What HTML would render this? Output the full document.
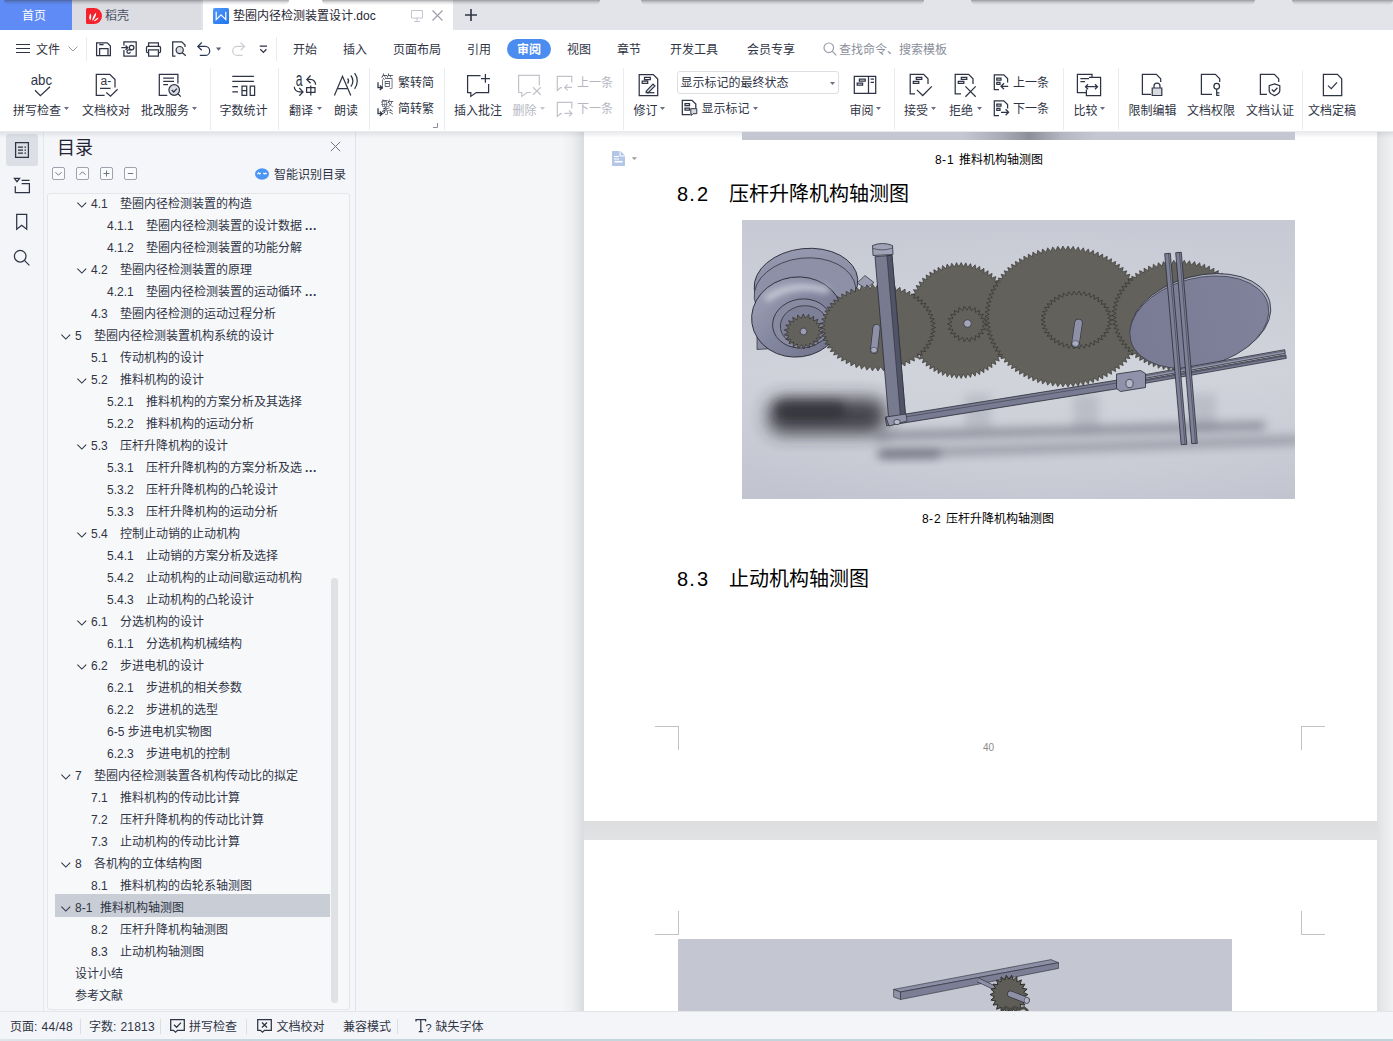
<!DOCTYPE html>
<html lang="zh-CN">
<head>
<meta charset="utf-8">
<title>垫圈内径检测装置设计.doc</title>
<style>
*{box-sizing:border-box;margin:0;padding:0}
html,body{width:1393px;height:1041px;overflow:hidden;background:#fff}
body{position:relative;font-family:"Liberation Sans","Noto Sans CJK SC",sans-serif;font-size:12px;color:#2f3445;line-height:16px}
.abs{position:absolute}
.t{position:absolute;white-space:nowrap;height:16px;line-height:16px}
svg{position:absolute;overflow:visible}
.ic{fill:none;stroke:#2e3445;stroke-width:1.25}
.dis{color:#b4b7bf}
.vsep{position:absolute;width:1px;background:#eaecf0}
.arr{position:absolute;width:0;height:0;border-left:2.500px solid transparent;border-right:2.500px solid transparent;border-top:3px solid #6b7080}
.arr.d{border-top-color:#c3c5cb}
/* tab bar */
#tabbar{left:0;top:0;width:1393px;height:30px;background:#e2e4e9}
#menurow{left:0;top:30px;width:1393px;height:36px;background:#fff}
#ribbon{left:0;top:66px;width:1393px;height:66px;background:#fff}
.tr{color:#2f3445}
.el{display:inline-block;margin-left:3px;letter-spacing:.6px;font-weight:bold}
</style>
</head>
<body>
<div id="tabbar" class="abs">
  <div class="abs" style="left:0;top:0;width:72px;height:30px;background:#5f8bf6"></div>
  <div class="t" style="left:22px;top:8px;color:#fff;font-size:12px">首页</div>
  <div class="abs" style="left:72px;top:0;width:129px;height:30px;background:#dbdde2"></div>
  <svg style="left:86px;top:8px" width="16" height="16" viewBox="0 0 16 16"><path d="M0 1.500A1.500 1.500 0 0 1 1.500 0H8a8 8 0 0 1 0 16H1.500A1.500 1.500 0 0 1 0 14.500z" fill="#f5222d"/><path d="M4.200 12.500C2.600 10.500 3 7.500 4.600 5.600C5.600 8 5.400 10.600 4.200 12.500zM6.200 12.800C6.400 10 7.800 6.600 10.200 4.600C10.200 8 8.800 11 6.200 12.800zM7.600 13.200C9 11.400 10.800 10 12.600 9.400C12 11.400 10 13 7.600 13.200z" fill="#fff"/></svg>
  <div class="t" style="left:105px;top:8px;color:#4a4f63">稻壳</div>
  <div class="abs" style="left:203px;top:0;width:250px;height:30px;background:#fff"></div>
  <svg style="left:213px;top:8px" width="16" height="16" viewBox="0 0 16 16"><defs><linearGradient id="wg" x1="0" y1="0" x2="1" y2="1"><stop offset="0" stop-color="#5298f8"/><stop offset="1" stop-color="#1f74ee"/></linearGradient></defs><rect width="16" height="16" rx="1.500" fill="url(#wg)"/><path d="M3.200 3.800V11.600L8 6.800L12.800 11.600V3.800" fill="none" stroke="#fff" stroke-width="1.200"/></svg>
  <div class="t" style="left:233px;top:8px;color:#1f2433">垫圈内径检测装置设计.doc</div>
  <svg style="left:411px;top:10px" width="12" height="12" viewBox="0 0 12 12"><path d="M.5.500h11v7.500H.5zM6 8v3M3 11.500h6" fill="none" stroke="#c3c6cf" stroke-width="1"/></svg>
  <svg style="left:432px;top:10px" width="11" height="11" viewBox="0 0 11 11"><path d="M.5.500l10 10M10.500.500l-10 10" fill="none" stroke="#9a9eaa" stroke-width="1.100"/></svg>
  <svg style="left:465px;top:9px" width="12" height="12" viewBox="0 0 12 12"><path d="M6 0v12M0 6h12" fill="none" stroke="#2e3445" stroke-width="1.600"/></svg>
  <div class="abs" style="left:4px;top:0;width:285px;height:5px;background:linear-gradient(180deg,rgba(50,52,60,.42),rgba(50,52,60,.16) 45%,rgba(50,52,60,0));border-radius:0 0 6px 6px"></div>
  <div class="abs" style="left:322px;top:0;width:278px;height:5px;background:linear-gradient(180deg,rgba(50,52,60,.42),rgba(50,52,60,.16) 45%,rgba(50,52,60,0));border-radius:0 0 6px 6px"></div>
  <div class="abs" style="left:641px;top:0;width:283px;height:5px;background:linear-gradient(180deg,rgba(50,52,60,.42),rgba(50,52,60,.16) 45%,rgba(50,52,60,0));border-radius:0 0 6px 6px"></div>
  <div class="abs" style="left:971px;top:0;width:284px;height:5px;background:linear-gradient(180deg,rgba(50,52,60,.42),rgba(50,52,60,.16) 45%,rgba(50,52,60,0));border-radius:0 0 6px 6px"></div>
  <div class="abs" style="left:1292px;top:0;width:101px;height:5px;background:linear-gradient(180deg,rgba(50,52,60,.42),rgba(50,52,60,.16) 45%,rgba(50,52,60,0));border-radius:0 0 6px 6px"></div>
</div>
<div id="menurow" class="abs">
  <svg style="left:16px;top:13px" width="14" height="11" viewBox="0 0 14 11"><path d="M0 1.500h14M0 5.500h14M0 9.500h14" fill="none" stroke="#2e3445" stroke-width="1.100"/></svg>
  <div class="t" style="left:36px;top:12px">文件</div>
  <svg style="left:68px;top:16px" width="10" height="6" viewBox="0 0 10 6"><path d="M.5.500L5 5l4.500-4.500" fill="none" stroke="#9a9eaa" stroke-width="1"/></svg>
  <div class="vsep" style="left:86px;top:7px;height:24px"></div>
  <svg style="left:90px;top:4px" width="200" height="30" viewBox="90 34 200 30">
    <path class="ic" d="M96.600 42.900H107.300L110.400 46V55.500H96.600zM99.300 44.600H103.600M99.600 55.500V48.700H108V55.500"/>
    <path class="ic" d="M123.900 45.500V41.800H136.200V56H123.900V50M121.300 47.700H127.800M125.600 45.500L127.800 47.700L125.600 49.900"/>
    <circle class="ic" cx="131.600" cy="47.600" r="2.300" stroke-width="1.050"/><path class="ic" d="M131.600 49.900H128.600A1.700 1.700 0 1 0 130.300 51.700" stroke-width="1.050"/>
    <path class="ic" d="M148.600 46.300V42.900H158.400V46.300M148.600 52.600H147.600A1.200 1.200 0 0 1 146.500 51.400V47.500A1.200 1.200 0 0 1 147.600 46.300H159.400A1.200 1.200 0 0 1 160.500 47.500V51.400A1.200 1.200 0 0 1 159.400 52.600H158.400M148.600 49.800H158.400V56H148.600z"/>
    <path class="ic" d="M175.500 56H172.700V41.800H181.700L185 45.100V47"/>
    <circle cx="179.700" cy="50.100" r="3.600" fill="#dcdde1" stroke="#2e3445" stroke-width="1.200"/>
    <path class="ic" d="M182.300 52.700L185.800 55.700"/>
    <path d="M201.800 42.500L197.800 46.400L201.800 50.300M197.800 46.400H205.200A4.500 4.500 0 0 1 205.200 55.400H199.800" fill="none" stroke="#2b3653" stroke-width="1.250"/>
    <path d="M216 47.600H221.200L218.600 50.800z" fill="#5a6078"/>
    <path d="M240.600 42.500L244.600 46.400L240.600 50.300M244.600 46.400H237.200A4.500 4.500 0 0 0 237.200 55.400H242.600" fill="none" stroke="#cbcdd3" stroke-width="1.200"/>
    <path class="ic" d="M259.700 46.200H267M260.300 49.200L263.400 52.400L266.400 49.200" stroke-width="1.150"/>
  </svg>
  <div class="vsep" style="left:276px;top:7px;height:24px"></div>
  <div class="t" style="left:293px;top:12px">开始</div>
  <div class="t" style="left:343px;top:12px">插入</div>
  <div class="t" style="left:393px;top:12px">页面布局</div>
  <div class="t" style="left:467px;top:12px">引用</div>
  <div class="abs" style="left:507px;top:9px;width:44px;height:20px;border-radius:10px;background:#4a8cf0"></div>
  <div class="t" style="left:517px;top:12px;color:#fff;font-weight:bold">审阅</div>
  <div class="t" style="left:567px;top:12px">视图</div>
  <div class="t" style="left:617px;top:12px">章节</div>
  <div class="t" style="left:670px;top:12px">开发工具</div>
  <div class="t" style="left:747px;top:12px">会员专享</div>
  <svg style="left:823px;top:12px" width="14" height="14" viewBox="0 0 14 14"><circle cx="5.800" cy="5.800" r="4.800" fill="none" stroke="#9a9eaa" stroke-width="1.200"/><path d="M9.300 9.300l4 4" stroke="#9a9eaa" stroke-width="1.200"/></svg>
  <div class="t" style="left:839px;top:12px;color:#8a8e9a">查找命令、搜索模板</div>
</div>
<div id="ribbon" class="abs">
<svg style="left:28px;top:4px" width="28" height="30" viewBox="0 0 28 30"><text x="2.700" y="14.700" font-size="14.500" textLength="21.400" lengthAdjust="spacingAndGlyphs" fill="#2e3445" font-family="Liberation Sans, sans-serif">abc</text><path class="ic" d="M7 20.200L12.400 25.600L22 16.800"/></svg>
<div class="t " style="left:13px;top:37px;">拼写检查</div>
<svg style="left:64px;top:41px" width="5" height="3" viewBox="0 0 5 3"><path d="M0 0H5L2.500 3z" fill="#6b7080"/></svg>
<svg style="left:94px;top:6px" width="26" height="26" viewBox="0 0 26 26"><path class="ic" d="M10.600 23.400H2.300V2.300H15.800L21 7.500V15.400"/><text x="11.800" y="13.200" text-anchor="middle" font-size="12" fill="#2e3445" font-family="Liberation Sans, sans-serif">a-</text><path class="ic" d="M6 16.400H16.500M12.300 20.500L16.500 24.200L23.600 17.300"/></svg>
<div class="t " style="left:82px;top:37px;">文档校对</div>
<svg style="left:157px;top:6px" width="26" height="26" viewBox="0 0 26 26"><path class="ic" d="M10.300 23.400H2.300V2.300H20.900V11.500"/><path class="ic" d="M6.200 6.100H17M6.200 9.300H17M6.200 12.500H11"/><circle cx="17.200" cy="18" r="5.300" fill="#dcdee3" stroke="#2e3445" stroke-width="1.200"/><path class="ic" d="M14.700 18l2 2 3.200-3.400M21.200 22l2.600 2.600"/></svg>
<div class="t " style="left:141px;top:37px;">批改服务</div>
<svg style="left:192px;top:41px" width="5" height="3" viewBox="0 0 5 3"><path d="M0 0H5L2.500 3z" fill="#6b7080"/></svg>
<div class="vsep" style="left:210px;top:2px;height:62px"></div>
<svg style="left:230px;top:6px" width="28" height="26" viewBox="0 0 28 26"><path class="ic" d="M2.300 4.400H23.900M2.300 9.300H23.900M2.300 14.700H8M2.300 19.900H8"/><path class="ic" d="M12 14.200H16.700V23.400H12zM12 18.600H16.700M20.200 14.200H24.600V23.400H20.200z"/></svg>
<div class="t " style="left:219.5px;top:37px;">字数统计</div>
<div class="vsep" style="left:278px;top:2px;height:62px"></div>
<svg style="left:292px;top:6px" width="26" height="26" viewBox="0 0 26 26"><text x="0" y="0" font-size="19.500" transform="translate(3.800 13.600) scale(0.62 1)" fill="#2e3445" font-family="Liberation Sans, sans-serif">a</text><path class="ic" d="M23.600 12.800A5.200 5.200 0 0 0 18.400 7.400H15M18.600 3.500L14.800 7.400L18.600 11.300"/><path class="ic" d="M2.300 14.700A5.200 5.200 0 0 0 7.500 19.900H10.500M7.300 16L11 19.900L7.300 23.700"/><path class="ic" d="M14.600 15.600H23V20.400H14.600zM18.800 13.400V23.600"/></svg>
<div class="t " style="left:289px;top:37px;">翻译</div>
<svg style="left:317px;top:41px" width="5" height="3" viewBox="0 0 5 3"><path d="M0 0H5L2.500 3z" fill="#6b7080"/></svg>
<svg style="left:332px;top:4px" width="28" height="28" viewBox="0 0 28 28"><path class="ic" d="M2.400 25.500L10.500 6.300L18.800 25.500M5.300 18.600H15.800" stroke-width="1.250"/><path class="ic" d="M15.600 8.500A4 4 0 0 1 15.600 13.500M18.800 5.500A8.300 8.300 0 0 1 18.800 16.500M22.600 3.200A12.800 12.800 0 0 1 22.600 18.800"/></svg>
<div class="t " style="left:334px;top:37px;">朗读</div>
<div class="vsep" style="left:369px;top:2px;height:62px"></div>
<div class="t" style="left:380.500px;top:8px;font-size:13.500px;font-weight:300;color:#2e3445;width:13px;transform:scaleY(1.22);transform-origin:50% 50%">简</div>
<svg style="left:376px;top:9px" width="8" height="16" viewBox="0 0 8 16"><path class="ic" d="M2 7.300V12.700H6M3.800 10.500L6.200 12.700L3.800 15" stroke-width="1.100"/></svg>
<div class="t " style="left:398px;top:9px;">繁转简</div>
<div class="t" style="left:380.500px;top:34px;font-size:13.500px;font-weight:300;color:#2e3445;width:13px;transform:scaleY(1.22);transform-origin:50% 50%">繁</div>
<svg style="left:376px;top:35px" width="8" height="16" viewBox="0 0 8 16"><path class="ic" d="M2 7.300V12.700H6M3.800 10.500L6.200 12.700L3.800 15" stroke-width="1.100"/></svg>
<div class="t " style="left:398px;top:35px;">简转繁</div>
<svg style="left:433px;top:57px" width="5" height="5" viewBox="0 0 5 5"><path d="M4.500 0V4.500H0" fill="none" stroke="#8a8e9a" stroke-width="1"/></svg>
<div class="vsep" style="left:443.5px;top:2px;height:62px"></div>
<svg style="left:465px;top:6px" width="28" height="26" viewBox="0 0 28 26"><path class="ic" d="M15.500 3.700H2.600V20.500H5.800V24.400L11.200 20.500H23.600V12" stroke-width="1.300"/><path class="ic" d="M20.400 2V10.800M16 6.500H25" stroke-width="1.300"/></svg>
<div class="t " style="left:454px;top:37px;">插入批注</div>
<svg style="left:516px;top:6px" width="28" height="26" viewBox="0 0 28 26"><path d="M14.900 20.500H11L5.800 24.400V20.500H2.600V3.300H23.300V13.400" fill="none" stroke="#c0c3ca" stroke-width="1.200"/><path d="M17 15.300L24.800 22.700M24.800 15.300L17 22.700" fill="none" stroke="#c0c3ca" stroke-width="1.200"/></svg>
<div class="t dis" style="left:512.5px;top:37px;">删除</div>
<svg style="left:540px;top:41px" width="5" height="3" viewBox="0 0 5 3"><path d="M0 0H5L2.500 3z" fill="#c3c5cb"/></svg>
<svg style="left:556px;top:7px" width="18" height="20" viewBox="0 0 18 20"><path d="M15.800 9.500V3.300H1.300V17.500L4.500 14.700H6" fill="none" stroke="#c0c3ca" stroke-width="1.200"/><path d="M16 14.400H8.700M11.700 11.400L8.700 14.400L11.700 17.400" fill="none" stroke="#c0c3ca" stroke-width="1.200"/></svg>
<div class="t dis" style="left:577px;top:9px;">上一条</div>
<svg style="left:556px;top:33px" width="18" height="20" viewBox="0 0 18 20"><path d="M15.800 9.500V3.300H1.300V17.500L4.500 14.700H6" fill="none" stroke="#c0c3ca" stroke-width="1.200"/><path d="M8.500 14.400H16M13 11.400L16 14.400L13 17.400" fill="none" stroke="#c0c3ca" stroke-width="1.200"/></svg>
<div class="t dis" style="left:577px;top:35px;">下一条</div>
<div class="vsep" style="left:622.5px;top:2px;height:62px"></div>
<svg style="left:637px;top:6px" width="24" height="26" viewBox="0 0 24 26"><path class="ic" d="M2.200 2.600H16.300L20.700 7V23.500H2.200z" stroke-width="1.300"/><path class="ic" d="M7.500 5.400H13.300V7.600H7.500zM5.200 9.200H10.700V11.400H5.200z" stroke-width="1"/><path d="M9 19.300L16 12L18 14L11 21z" fill="#d9dbe0" stroke="#2e3445" stroke-width="1.100"/><path class="ic" d="M8.600 20.700H17.400"/></svg>
<div class="t " style="left:633.5px;top:37px;">修订</div>
<svg style="left:660px;top:41px" width="5" height="3" viewBox="0 0 5 3"><path d="M0 0H5L2.500 3z" fill="#6b7080"/></svg>
<div class="abs" style="left:677px;top:4.5px;width:161.500px;height:23px;border:1px solid #dcdee3;border-radius:3px;background:#fff"></div>
<div class="t " style="left:680.5px;top:8.5px;">显示标记的最终状态</div>
<svg style="left:830px;top:15.5px" width="5" height="3" viewBox="0 0 5 3"><path d="M0 0H5L2.500 3z" fill="#6b7080"/></svg>
<svg style="left:681px;top:33px" width="18" height="18" viewBox="0 0 18 18"><path class="ic" d="M9.500 15.600H1.300V1.300H11L14.800 5V9.500"/><path class="ic" d="M4 4.500H8.500V6.500H4zM4 9H8.500V11H4z" stroke-width="1"/><path d="M9.800 9.700H15.800V14.700H12L10.300 16.500V14.700H9.800z" fill="#d9dbe0" stroke="#2e3445" stroke-width="1"/></svg>
<div class="t " style="left:701.5px;top:35px;">显示标记</div>
<svg style="left:753px;top:40.5px" width="5" height="3" viewBox="0 0 5 3"><path d="M0 0H5L2.500 3z" fill="#6b7080"/></svg>
<svg style="left:852px;top:6px" width="26" height="24" viewBox="0 0 26 24"><path class="ic" d="M2.300 4.400H23.700V21.300H2.300zM16.500 4.400V21.300" stroke-width="1.300"/><path class="ic" d="M7.400 7.200H13.200V9.200H7.400zM5.200 11H10.600V13.200H5.200z" stroke-width="1"/><path class="ic" d="M18.600 7.200H22M18.600 10.300H22" stroke-width="1"/></svg>
<div class="t " style="left:849.5px;top:37px;">审阅</div>
<svg style="left:876px;top:41px" width="5" height="3" viewBox="0 0 5 3"><path d="M0 0H5L2.500 3z" fill="#6b7080"/></svg>
<div class="vsep" style="left:893.5px;top:2px;height:62px"></div>
<svg style="left:909px;top:6px" width="26" height="26" viewBox="0 0 26 26"><path class="ic" d="M6 21.800H1.200V2.400H14.600L19 6.800V12"/><path class="ic" d="M7.300 5.300H12.800V7.300H7.300zM4.300 9.300H9.800V11.300H4.300z" stroke-width=".9"/><path class="ic" d="M7.900 17.900L13.700 23.500L22.800 14.400"/></svg>
<div class="t " style="left:904px;top:37px;">接受</div>
<svg style="left:931px;top:41px" width="5" height="3" viewBox="0 0 5 3"><path d="M0 0H5L2.500 3z" fill="#6b7080"/></svg>
<svg style="left:954px;top:6px" width="26" height="26" viewBox="0 0 26 26"><path class="ic" d="M7 21.800H1.200V2.400H14.600L19 6.800V12"/><path class="ic" d="M7.300 5.300H12.800V7.300H7.300zM4.300 9.300H9.800V11.300H4.300z" stroke-width=".9"/><path class="ic" d="M11.400 14.400L21.700 24.800M21.700 14.400L11.400 24.800"/></svg>
<div class="t " style="left:949px;top:37px;">拒绝</div>
<svg style="left:977px;top:41px" width="5" height="3" viewBox="0 0 5 3"><path d="M0 0H5L2.500 3z" fill="#6b7080"/></svg>
<svg style="left:993px;top:8px" width="18" height="18" viewBox="0 0 18 18"><path class="ic" d="M6 15.500H1.300V.9H10.800L14.600 4.600V8.500"/><path class="ic" d="M3.800 4.200H8V6.200H3.800zM3.800 8.400H7V10.400H3.800z" stroke-width="1"/><path class="ic" d="M15.200 12.300H8M11 9.300L8 12.300L11 15.300"/></svg>
<div class="t " style="left:1013px;top:9px;">上一条</div>
<svg style="left:993px;top:34px" width="18" height="18" viewBox="0 0 18 18"><path class="ic" d="M6 15.500H1.300V.9H10.800L14.600 4.600V8.500"/><path class="ic" d="M3.800 4.200H8V6.200H3.800zM3.800 8.400H7V10.400H3.800z" stroke-width="1"/><path class="ic" d="M8 12.300H15.600M12.600 9.300L15.600 12.300L12.600 15.300"/></svg>
<div class="t " style="left:1013px;top:35px;">下一条</div>
<div class="vsep" style="left:1062.5px;top:2px;height:62px"></div>
<svg style="left:1075px;top:6px" width="28" height="26" viewBox="0 0 28 26"><path class="ic" d="M11.400 20.500H2.400V2.400H17V5.400"/><path class="ic" d="M14 5.400H25.600V23.500H11.400V17.500"/><path class="ic" d="M5.400 6.700H14M5.400 9.500H10" stroke-width="1"/><path class="ic" d="M10.600 14.700H22.400M13 12.200L10.500 14.700L13 17.200M20 12.200L22.500 14.700L20 17.200" stroke-width="1.100"/></svg>
<div class="t " style="left:1073.5px;top:37px;">比较</div>
<svg style="left:1100px;top:41px" width="5" height="3" viewBox="0 0 5 3"><path d="M0 0H5L2.500 3z" fill="#6b7080"/></svg>
<div class="vsep" style="left:1117.5px;top:2px;height:62px"></div>
<svg style="left:1140px;top:6px" width="26" height="26" viewBox="0 0 26 26"><path class="ic" d="M11 22.400H2.400V2.400H16.400L20.700 6.700V10"/><path d="M12.200 16H21.800V23.500H12.200z" fill="#d9dbe0" stroke="#2e3445" stroke-width="1.200"/><path class="ic" d="M14 16V14A3 3 0 0 1 20 14V16"/></svg>
<div class="t " style="left:1128.5px;top:37px;">限制编辑</div>
<svg style="left:1199px;top:6px" width="26" height="26" viewBox="0 0 26 26"><path class="ic" d="M13 22.400H2.400V2.400H16.400L20.700 6.700V10"/><circle class="ic" cx="17.700" cy="14.200" r="2.800"/><path class="ic" d="M17.700 17V23.800M17.700 20.800H20.400M17.700 23.400H20.400"/></svg>
<div class="t " style="left:1187px;top:37px;">文档权限</div>
<svg style="left:1258px;top:6px" width="26" height="26" viewBox="0 0 26 26"><path class="ic" d="M9 22.400H2.400V2.400H16.400L20.700 6.700V10"/><path class="ic" d="M16.500 11.800L21.800 13.600V18.400C21.800 20.800 19 22.600 16.500 23.600C14 22.600 11.200 20.800 11.200 18.400V13.600z"/><path class="ic" d="M13.800 17.500L15.900 19.500L19.400 15.800" stroke-width="1.100"/></svg>
<div class="t " style="left:1246px;top:37px;">文档认证</div>
<div class="vsep" style="left:1301.5px;top:4px;height:60px"></div>
<svg style="left:1321px;top:6px" width="24" height="26" viewBox="0 0 24 26"><path class="ic" d="M2.400 2.400H16.400L20.700 6.700V23.500H2.400z"/><path class="ic" d="M7 13.600L10.300 16.600L16 10.400" stroke-width="1.100"/></svg>
<div class="t " style="left:1308px;top:37px;">文档定稿</div>
</div>
<div class="abs" style="left:0;top:131px;width:1393px;height:1px;background:#e8eaee"></div>
<div id="rail" class="abs" style="left:0;top:132px;width:43px;height:879px;background:#f4f5f8"></div>
<div class="abs" style="left:43px;top:132px;width:1px;height:879px;background:#e4e6ea"></div>
<div id="side" class="abs" style="left:44px;top:132px;width:311px;height:879px;background:#f5f6f9"></div>
<div class="abs" style="left:355px;top:132px;width:1px;height:879px;background:#e1e3e8"></div>
<div class="abs" style="left:6px;top:134px;width:32px;height:32px;border-radius:3px;background:#dcdfe6"></div>
<svg style="left:14px;top:141px" width="16" height="18" viewBox="0 0 16 18"><path class="ic" d="M1.600 1.600H14.400V16.400H1.600z" stroke-width="1.300"/><path class="ic" d="M4 6H9M10.500 6H12M4 9H9M10.500 9H12M4 12H9M10.500 12H12" stroke-width="1"/></svg>
<svg style="left:14px;top:177px" width="16" height="16" viewBox="0 0 16 16"><path class="ic" d="M.4 1.300H5.600L3 4.700zM7.600 3.300H15.500M7.600 6.600H15.400V15.600H1.300V9.200" stroke-width="1.150"/></svg>
<svg style="left:15px;top:213px" width="14" height="18" viewBox="0 0 14 18"><path class="ic" d="M1.700 1.300H11.700V16.200L6.700 12.200L1.700 16.200z" stroke-width="1.300"/></svg>
<svg style="left:13px;top:249px" width="18" height="18" viewBox="0 0 18 18"><circle class="ic" cx="7.200" cy="7.200" r="5.800" stroke-width="1.300"/><path class="ic" d="M11.400 11.400L16.400 16.400" stroke-width="1.400"/></svg>
<div class="t" style="left:57px;top:136px;font-size:18px;line-height:24px;height:24px;color:#1f2433">目录</div>
<svg style="left:330px;top:141px" width="11" height="11" viewBox="0 0 11 11"><path d="M.8.800L10.200 10.200M10.200.800L.8 10.200" fill="none" stroke="#6f7482" stroke-width="1"/></svg>
<div class="abs" style="left:52px;top:167px;width:13px;height:13px;border:1px solid #9ea2ad;border-radius:2px;background:#f9fafb"></div>
<svg style="left:52px;top:167px" width="13" height="13" viewBox="0 0 13 13"><path d="M3.500 5.200L6.500 8.200L9.500 5.200" fill="none" stroke="#6f7482" stroke-width="1"/></svg>
<div class="abs" style="left:76px;top:167px;width:13px;height:13px;border:1px solid #9ea2ad;border-radius:2px;background:#f9fafb"></div>
<svg style="left:76px;top:167px" width="13" height="13" viewBox="0 0 13 13"><path d="M3.500 7.800L6.500 4.800L9.500 7.800" fill="none" stroke="#6f7482" stroke-width="1"/></svg>
<div class="abs" style="left:100px;top:167px;width:13px;height:13px;border:1px solid #9ea2ad;border-radius:2px;background:#f9fafb"></div>
<svg style="left:100px;top:167px" width="13" height="13" viewBox="0 0 13 13"><path d="M3.500 6.500H9.500M6.500 3.500V9.500" fill="none" stroke="#6f7482" stroke-width="1"/></svg>
<div class="abs" style="left:124px;top:167px;width:13px;height:13px;border:1px solid #9ea2ad;border-radius:2px;background:#f9fafb"></div>
<svg style="left:124px;top:167px" width="13" height="13" viewBox="0 0 13 13"><path d="M3.800 6.500H9.200" fill="none" stroke="#6f7482" stroke-width="1"/></svg>
<svg style="left:255px;top:168px" width="14" height="12" viewBox="0 0 14 12"><ellipse cx="7" cy="6" rx="7" ry="5.800" fill="#4c96f3"/><path d="M2.400 6.200L3.700 4.900L4.700 5.900L5.700 5M8.300 5L9.400 6L10.400 5L11.700 6.200" fill="none" stroke="#fff" stroke-width="1.100"/></svg>
<div class="t" style="left:274px;top:167px;color:#2f3445">智能识别目录</div>
<div id="tree" class="abs" style="left:47px;top:193px;width:303px;height:817px;border:1px solid #e4e6ea;border-radius:3px;background:#f7f8fa;overflow:hidden"></div>
<svg style="left:76.5px;top:201.5px" width="10" height="6" viewBox="0 0 10 6"><path d="M.4.700L4.800 5.100L9.200.700" fill="none" stroke="#2e3445" stroke-width="1.050"/></svg>
<div class="t tr" style="left:91px;top:196px">4.1</div><div class="t tr" style="left:120px;top:196px">垫圈内径检测装置的构造</div>
<div class="t tr" style="left:107px;top:218px">4.1.1</div><div class="t tr" style="left:146px;top:218px">垫圈内径检测装置的设计数据<span class="el">...</span></div>
<div class="t tr" style="left:107px;top:240px">4.1.2</div><div class="t tr" style="left:146px;top:240px">垫圈内径检测装置的功能分解</div>
<svg style="left:76.5px;top:267.5px" width="10" height="6" viewBox="0 0 10 6"><path d="M.4.700L4.800 5.100L9.200.700" fill="none" stroke="#2e3445" stroke-width="1.050"/></svg>
<div class="t tr" style="left:91px;top:262px">4.2</div><div class="t tr" style="left:120px;top:262px">垫圈内径检测装置的原理</div>
<div class="t tr" style="left:107px;top:284px">4.2.1</div><div class="t tr" style="left:146px;top:284px">垫圈内径检测装置的运动循环<span class="el">...</span></div>
<div class="t tr" style="left:91px;top:306px">4.3</div><div class="t tr" style="left:120px;top:306px">垫圈内径检测的运动过程分析</div>
<svg style="left:60.5px;top:333.5px" width="10" height="6" viewBox="0 0 10 6"><path d="M.4.700L4.800 5.100L9.200.700" fill="none" stroke="#2e3445" stroke-width="1.050"/></svg>
<div class="t tr" style="left:75px;top:328px">5</div><div class="t tr" style="left:94px;top:328px">垫圈内径检测装置机构系统的设计</div>
<div class="t tr" style="left:91px;top:350px">5.1</div><div class="t tr" style="left:120px;top:350px">传动机构的设计</div>
<svg style="left:76.5px;top:377.5px" width="10" height="6" viewBox="0 0 10 6"><path d="M.4.700L4.800 5.100L9.200.700" fill="none" stroke="#2e3445" stroke-width="1.050"/></svg>
<div class="t tr" style="left:91px;top:372px">5.2</div><div class="t tr" style="left:120px;top:372px">推料机构的设计</div>
<div class="t tr" style="left:107px;top:394px">5.2.1</div><div class="t tr" style="left:146px;top:394px">推料机构的方案分析及其选择</div>
<div class="t tr" style="left:107px;top:416px">5.2.2</div><div class="t tr" style="left:146px;top:416px">推料机构的运动分析</div>
<svg style="left:76.5px;top:443.5px" width="10" height="6" viewBox="0 0 10 6"><path d="M.4.700L4.800 5.100L9.200.700" fill="none" stroke="#2e3445" stroke-width="1.050"/></svg>
<div class="t tr" style="left:91px;top:438px">5.3</div><div class="t tr" style="left:120px;top:438px">压杆升降机构的设计</div>
<div class="t tr" style="left:107px;top:460px">5.3.1</div><div class="t tr" style="left:146px;top:460px">压杆升降机构的方案分析及选<span class="el">...</span></div>
<div class="t tr" style="left:107px;top:482px">5.3.2</div><div class="t tr" style="left:146px;top:482px">压杆升降机构的凸轮设计</div>
<div class="t tr" style="left:107px;top:504px">5.3.3</div><div class="t tr" style="left:146px;top:504px">压杆升降机构的运动分析</div>
<svg style="left:76.5px;top:531.5px" width="10" height="6" viewBox="0 0 10 6"><path d="M.4.700L4.800 5.100L9.200.700" fill="none" stroke="#2e3445" stroke-width="1.050"/></svg>
<div class="t tr" style="left:91px;top:526px">5.4</div><div class="t tr" style="left:120px;top:526px">控制止动销的止动机构</div>
<div class="t tr" style="left:107px;top:548px">5.4.1</div><div class="t tr" style="left:146px;top:548px">止动销的方案分析及选择</div>
<div class="t tr" style="left:107px;top:570px">5.4.2</div><div class="t tr" style="left:146px;top:570px">止动机构的止动间歇运动机构</div>
<div class="t tr" style="left:107px;top:592px">5.4.3</div><div class="t tr" style="left:146px;top:592px">止动机构的凸轮设计</div>
<svg style="left:76.5px;top:619.5px" width="10" height="6" viewBox="0 0 10 6"><path d="M.4.700L4.800 5.100L9.200.700" fill="none" stroke="#2e3445" stroke-width="1.050"/></svg>
<div class="t tr" style="left:91px;top:614px">6.1</div><div class="t tr" style="left:120px;top:614px">分选机构的设计</div>
<div class="t tr" style="left:107px;top:636px">6.1.1</div><div class="t tr" style="left:146px;top:636px">分选机构机械结构</div>
<svg style="left:76.5px;top:663.5px" width="10" height="6" viewBox="0 0 10 6"><path d="M.4.700L4.800 5.100L9.200.700" fill="none" stroke="#2e3445" stroke-width="1.050"/></svg>
<div class="t tr" style="left:91px;top:658px">6.2</div><div class="t tr" style="left:120px;top:658px">步进电机的设计</div>
<div class="t tr" style="left:107px;top:680px">6.2.1</div><div class="t tr" style="left:146px;top:680px">步进机的相关参数</div>
<div class="t tr" style="left:107px;top:702px">6.2.2</div><div class="t tr" style="left:146px;top:702px">步进机的选型</div>
<div class="t tr" style="left:107px;top:724px">6-5 步进电机实物图</div>
<div class="t tr" style="left:107px;top:746px">6.2.3</div><div class="t tr" style="left:146px;top:746px">步进电机的控制</div>
<svg style="left:60.5px;top:773.5px" width="10" height="6" viewBox="0 0 10 6"><path d="M.4.700L4.800 5.100L9.200.700" fill="none" stroke="#2e3445" stroke-width="1.050"/></svg>
<div class="t tr" style="left:75px;top:768px">7</div><div class="t tr" style="left:94px;top:768px">垫圈内径检测装置各机构传动比的拟定</div>
<div class="t tr" style="left:91px;top:790px">7.1</div><div class="t tr" style="left:120px;top:790px">推料机构的传动比计算</div>
<div class="t tr" style="left:91px;top:812px">7.2</div><div class="t tr" style="left:120px;top:812px">压杆升降机构的传动比计算</div>
<div class="t tr" style="left:91px;top:834px">7.3</div><div class="t tr" style="left:120px;top:834px">止动机构的传动比计算</div>
<svg style="left:60.5px;top:861.5px" width="10" height="6" viewBox="0 0 10 6"><path d="M.4.700L4.800 5.100L9.200.700" fill="none" stroke="#2e3445" stroke-width="1.050"/></svg>
<div class="t tr" style="left:75px;top:856px">8</div><div class="t tr" style="left:94px;top:856px">各机构的立体结构图</div>
<div class="t tr" style="left:91px;top:878px">8.1</div><div class="t tr" style="left:120px;top:878px">推料机构的齿轮系轴测图</div>
<div class="abs" style="left:55px;top:894px;width:275px;height:23px;background:#c8cdd6"></div>
<svg style="left:60.5px;top:905.5px" width="10" height="6" viewBox="0 0 10 6"><path d="M.4.700L4.800 5.100L9.200.700" fill="none" stroke="#2e3445" stroke-width="1.050"/></svg>
<div class="t tr" style="left:75px;top:900px">8-1</div><div class="t tr" style="left:100px;top:900px">推料机构轴测图</div>
<div class="t tr" style="left:91px;top:922px">8.2</div><div class="t tr" style="left:120px;top:922px">压杆升降机构轴测图</div>
<div class="t tr" style="left:91px;top:944px">8.3</div><div class="t tr" style="left:120px;top:944px">止动机构轴测图</div>
<div class="t tr" style="left:75px;top:966px">设计小结</div>
<div class="t tr" style="left:75px;top:988px">参考文献</div>
<div class="abs" style="left:331px;top:578px;width:7px;height:425px;border-radius:3.500px;background:#dfe1e5"></div>
<div class="abs" style="left:356px;top:132px;width:1037px;height:879px;background:#e3e4e7"></div>
<div class="abs" style="left:356px;top:132px;width:228px;height:879px;background:linear-gradient(90deg,#f5f6f8 0,#f5f6f8 205px,#eff0f2 215px,#e5e6e9 222px,#d9dbde 228px)"></div>
<div class="abs" style="left:1377px;top:132px;width:16px;height:879px;background:linear-gradient(90deg,#dfe0e2 0,#e7e8ea 6px,#f0f1f2 16px)"></div>
<div class="abs" style="left:584px;top:132px;width:793px;height:689px;background:#fff"></div>
<div class="abs" style="left:584px;top:821px;width:793px;height:19px;background:linear-gradient(180deg,#dcdddf 0,#e2e3e5 100%)"></div>
<div class="abs" style="left:584px;top:840px;width:793px;height:171px;background:#fff"></div>
<div class="abs" style="left:0;top:132px;width:1393px;height:6px;background:linear-gradient(180deg,rgba(120,125,140,.16),rgba(120,125,140,0))"></div>
<div class="abs" style="left:742px;top:132px;width:553px;height:8px;background:linear-gradient(90deg,#c4c6d1 0,#c4c6d1 40%,#a9abb6 47%,#8d8f99 52%,#b5b7c2 58%,#c4c6d1 64%,#c4c6d1 100%)"></div>
<svg style="left:612px;top:151px" width="26" height="15" viewBox="0 0 26 15"><path d="M0 0H8.500L13 4.500V15H0z" fill="#b3c6e7"/><path d="M8 0V5H13" fill="none" stroke="#fff" stroke-width="1"/><path d="M2 5.500H7M2 8H7" stroke="#fff" stroke-width="1.200"/><path d="M2.500 10.700H10.500" stroke="#fff" stroke-width="1.600"/><path d="M19.800 6.300H25L22.400 9z" fill="#9a9a9a"/></svg>
<div class="t" style="left:935px;top:152px;color:#000;font-size:12px"><span style="display:inline-block;width:6px;text-align:center">8</span><span style="display:inline-block;width:6px;text-align:center">-</span><span style="display:inline-block;width:6px;text-align:center">1</span><span style="display:inline-block;width:6px"></span>推料机构轴测图</div>
<div class="t" style="left:922px;top:511px;color:#000;font-size:12px"><span style="display:inline-block;width:6px;text-align:center">8</span><span style="display:inline-block;width:6px;text-align:center">-</span><span style="display:inline-block;width:6px;text-align:center">2</span><span style="display:inline-block;width:6px"></span>压杆升降机构轴测图</div>
<div class="t" style="left:677px;top:180px;color:#000;font-size:20px;line-height:28px;height:28px"><span style="display:inline-block;width:10px;text-align:center">8</span><span style="display:inline-block;width:10px;text-align:center">.</span><span style="display:inline-block;width:10px;text-align:center">2</span><span style="display:inline-block;width:22px"></span>压杆升降机构轴测图</div>
<div class="t" style="left:677px;top:565px;color:#000;font-size:20px;line-height:28px;height:28px"><span style="display:inline-block;width:10px;text-align:center">8</span><span style="display:inline-block;width:10px;text-align:center">.</span><span style="display:inline-block;width:10px;text-align:center">3</span><span style="display:inline-block;width:22px"></span>止动机构轴测图</div>
<div class="t" style="left:983px;top:741px;color:#8a8a8a;font-size:10px;height:14px;line-height:14px">40</div>
<div class="abs" style="left:655px;top:726px;width:24px;height:1px;background:#c2c2c2"></div>
<div class="abs" style="left:678px;top:726px;width:1px;height:24px;background:#c2c2c2"></div>
<div class="abs" style="left:1301px;top:726px;width:24px;height:1px;background:#c2c2c2"></div>
<div class="abs" style="left:1301px;top:726px;width:1px;height:24px;background:#c2c2c2"></div>
<div class="abs" style="left:655px;top:934px;width:24px;height:1px;background:#c2c2c2"></div>
<div class="abs" style="left:678px;top:911px;width:1px;height:24px;background:#c2c2c2"></div>
<div class="abs" style="left:1301px;top:934px;width:24px;height:1px;background:#c2c2c2"></div>
<div class="abs" style="left:1301px;top:911px;width:1px;height:24px;background:#c2c2c2"></div>
<svg style="left:742px;top:220px" width="553" height="279" viewBox="0 0 553 279"><defs><linearGradient id="bgG" x1="0" y1="0" x2="0" y2="1"><stop offset="0" stop-color="#c7c9d4"/><stop offset=".55" stop-color="#cfd1da"/><stop offset="1" stop-color="#c1c4cf"/></linearGradient><radialGradient id="bgR" cx=".55" cy=".62" r=".6"><stop offset="0" stop-color="#d3d5dc" stop-opacity=".55"/><stop offset="1" stop-color="#d9dbe2" stop-opacity="0"/></radialGradient><filter id="b10" x="-50%" y="-50%" width="200%" height="200%"><feGaussianBlur stdDeviation="9"/></filter><filter id="b6" x="-50%" y="-100%" width="200%" height="300%"><feGaussianBlur stdDeviation="5"/></filter><filter id="b3" x="-50%" y="-100%" width="200%" height="300%"><feGaussianBlur stdDeviation="3"/></filter><linearGradient id="motG" x1="0" y1="0" x2="1" y2="1"><stop offset="0" stop-color="#a3a6b9"/><stop offset=".45" stop-color="#8487a0"/><stop offset="1" stop-color="#6d7086"/></linearGradient><linearGradient id="motB" x1="0" y1="0" x2="0" y2="1"><stop offset="0" stop-color="#9598ae"/><stop offset="1" stop-color="#7e8199"/></linearGradient><linearGradient id="camG" x1="0" y1="0" x2="1" y2="0"><stop offset="0" stop-color="#787b93"/><stop offset="1" stop-color="#7f829a"/></linearGradient><clipPath id="imgclip"><rect x="0" y="0" width="553" height="279"/></clipPath></defs><g clip-path="url(#imgclip)"><rect width="553" height="279" fill="url(#bgG)"/><rect width="553" height="279" fill="url(#bgR)"/><rect x="26" y="178" width="118" height="36" rx="14" fill="#2a2c33" opacity=".85" filter="url(#b10)"/><rect x="33" y="180" width="70" height="18" rx="9" fill="#1c1e24" opacity=".45" filter="url(#b6)"/><rect x="223" y="174" width="26" height="36" fill="#8d909c" opacity=".3" filter="url(#b6)"/><rect x="331" y="174" width="26" height="36" fill="#8d909c" opacity=".3" filter="url(#b6)"/><rect x="448" y="174" width="26" height="36" fill="#8d909c" opacity=".3" filter="url(#b6)"/><rect x="132" y="211.5" width="392" height="9" rx="4.500" fill="#747783" opacity=".7" filter="url(#b6)" transform="rotate(-1.500 132 216)"/><rect x="134" y="229.5" width="425" height="9" rx="4.500" fill="#7b7e8a" opacity=".62" filter="url(#b6)" transform="rotate(-1.900 134 234)"/><rect x="138" y="230" width="60" height="8" rx="4" fill="#4d505b" opacity=".55" filter="url(#b6)"/><ellipse cx="64" cy="64" rx="52" ry="35.500" fill="url(#motB)" stroke="#2b2c36" stroke-width=".9" transform="rotate(-6 64 64)"/><ellipse cx="63" cy="73" rx="51" ry="35" fill="#8d90a7" stroke="#2b2c36" stroke-width=".7" transform="rotate(-6 63 73)"/><path d="M15 117l0 12.500l16-1z" fill="#8a8da2" stroke="#2b2c36" stroke-width=".7"/><path d="M115 63l8-7.500l9 7l-8 6z" fill="#9a9db1" stroke="#2b2c36" stroke-width=".7"/><ellipse cx="55" cy="97" rx="45.500" ry="40" fill="url(#motG)" stroke="#2b2c36" stroke-width=".9" transform="rotate(-8 55 97)"/><path d="M26 78q24-17 58-8" fill="none" stroke="#d3d5e0" stroke-width="6" stroke-linecap="round" opacity=".9" filter="url(#b3)"/><ellipse cx="60" cy="103.5" rx="29.500" ry="24.500" fill="#878aa0" stroke="#2b2c36" stroke-width=".8" transform="rotate(-8 60 103.5)"/><ellipse cx="61.5" cy="105.5" rx="23.500" ry="19.500" fill="#7d8096" stroke="#2b2c36" stroke-width=".7" transform="rotate(-8 60 103.5)"/><path d="M273.0 100.5L268.8 102.8L272.8 105.5L268.4 107.4L272.2 110.4L267.6 112.0L271.2 115.3L266.5 116.5L269.8 120.1L265.0 120.8L268.0 124.7L263.2 125.0L265.8 129.1L261.1 129.1L263.3 133.4L258.6 132.9L260.5 137.4L255.8 136.4L257.3 141.1L252.7 139.8L253.9 144.5L249.4 142.8L250.1 147.6L245.9 145.5L246.2 150.3L242.1 147.8L242.0 152.7L238.2 149.9L237.7 154.7L234.1 151.5L233.2 156.2L229.9 152.8L228.6 157.4L225.6 153.7L223.9 158.2L221.3 154.2L219.2 158.5L216.9 154.3L214.5 158.4L212.5 154.0L209.7 157.8L208.2 153.3L205.1 156.9L204.0 152.2L200.6 155.5L199.8 150.7L196.1 153.7L195.8 148.9L191.9 151.5L192.0 146.7L187.8 149.0L188.3 144.2L184.0 146.1L184.9 141.3L180.4 142.8L181.7 138.1L177.1 139.2L178.8 134.7L174.1 135.4L176.1 131.0L171.4 131.3L173.8 127.1L169.0 126.9L171.8 122.9L167.1 122.4L170.2 118.7L165.5 117.7L168.9 114.2L164.3 112.9L168.0 109.7L163.5 108.0L167.4 105.1L163.1 103.0L167.2 100.5L163.1 98.0L167.4 95.9L163.5 93.0L168.0 91.3L164.3 88.1L168.9 86.8L165.5 83.3L170.2 82.3L167.1 78.6L171.8 78.1L169.0 74.1L173.8 73.9L171.4 69.7L176.1 70.0L174.1 65.6L178.8 66.3L177.1 61.8L181.7 62.9L180.4 58.2L184.9 59.7L184.0 54.9L188.3 56.8L187.8 52.0L192.0 54.3L191.9 49.5L195.8 52.1L196.1 47.3L199.8 50.3L200.6 45.5L204.0 48.8L205.1 44.1L208.2 47.7L209.7 43.2L212.5 47.0L214.5 42.6L216.9 46.7L219.2 42.5L221.3 46.8L223.9 42.8L225.6 47.3L228.6 43.6L229.9 48.2L233.2 44.8L234.1 49.5L237.7 46.3L238.2 51.1L242.0 48.3L242.1 53.2L246.2 50.7L245.9 55.5L250.1 53.4L249.4 58.2L253.9 56.5L252.7 61.2L257.3 59.9L255.8 64.6L260.5 63.6L258.6 68.1L263.3 67.6L261.1 71.9L265.8 71.9L263.2 76.0L268.0 76.3L265.0 80.2L269.8 80.9L266.5 84.5L271.2 85.7L267.6 89.0L272.2 90.6L268.4 93.6L272.8 95.5L268.8 98.2z" fill="#62615c" stroke="#2c2b27" stroke-width="0.6" stroke-linejoin="round"/><path d="M193.5 107.5L189.2 109.4L193.2 111.8L188.7 113.3L192.4 116.0L187.7 117.0L191.0 120.1L186.2 120.7L189.1 124.1L184.2 124.3L186.7 128.0L181.7 127.7L183.8 131.7L178.8 130.9L180.4 135.1L175.5 133.9L176.7 138.3L171.8 136.6L172.5 141.1L167.8 139.1L167.9 143.7L163.4 141.2L163.1 145.9L158.8 143.0L158.0 147.7L154.0 144.5L152.7 149.1L149.0 145.6L147.2 150.2L143.8 146.4L141.6 150.8L138.6 146.8L136.0 151.0L133.4 146.8L130.4 150.8L128.2 146.4L124.8 150.2L123.0 145.6L119.3 149.1L118.0 144.5L114.0 147.7L113.2 143.0L108.9 145.9L108.6 141.2L104.1 143.7L104.2 139.1L99.5 141.1L100.2 136.6L95.3 138.3L96.5 133.9L91.6 135.1L93.2 130.9L88.2 131.7L90.3 127.7L85.3 128.0L87.8 124.3L82.9 124.1L85.8 120.7L81.0 120.1L84.3 117.0L79.6 116.0L83.3 113.3L78.8 111.8L82.8 109.4L78.5 107.5L82.8 105.6L78.8 103.2L83.3 101.7L79.6 99.0L84.3 98.0L81.0 94.9L85.8 94.3L82.9 90.9L87.8 90.7L85.3 87.0L90.3 87.3L88.2 83.3L93.2 84.1L91.6 79.9L96.5 81.1L95.3 76.7L100.2 78.4L99.5 73.9L104.2 75.9L104.1 71.3L108.6 73.8L108.9 69.1L113.2 72.0L114.0 67.3L118.0 70.5L119.3 65.9L123.0 69.4L124.8 64.8L128.2 68.6L130.4 64.2L133.4 68.2L136.0 64.0L138.6 68.2L141.6 64.2L143.8 68.6L147.2 64.8L149.0 69.4L152.7 65.9L154.0 70.5L158.0 67.3L158.8 72.0L163.1 69.1L163.4 73.8L167.9 71.3L167.8 75.9L172.5 73.9L171.8 78.4L176.7 76.7L175.5 81.1L180.4 79.9L178.8 84.1L183.8 83.3L181.7 87.3L186.7 87.0L184.2 90.7L189.1 90.9L186.2 94.3L191.0 94.9L187.7 98.0L192.4 99.0L188.7 101.7L193.2 103.2L189.2 105.6z" fill="#62615c" stroke="#2c2b27" stroke-width="0.6" stroke-linejoin="round"/><path d="M404.0 96.5L399.8 98.6L403.8 101.0L399.4 102.9L403.3 105.5L398.8 107.1L402.5 110.0L397.9 111.3L401.4 114.4L396.6 115.4L399.9 118.7L395.1 119.4L398.1 123.0L393.3 123.3L396.0 127.1L391.1 127.2L393.6 131.1L388.7 130.9L391.0 135.0L386.1 134.4L388.0 138.7L383.2 137.8L384.8 142.2L380.0 141.1L381.3 145.5L376.6 144.1L377.6 148.7L373.0 147.0L373.7 151.6L369.1 149.6L369.6 154.3L365.1 152.1L365.2 156.8L360.9 154.3L360.7 159.0L356.6 156.2L356.1 161.0L352.1 158.0L351.3 162.7L347.5 159.4L346.4 164.1L342.9 160.6L341.4 165.2L338.1 161.6L336.3 166.1L333.3 162.3L331.2 166.7L328.4 162.7L326.1 167.0L323.5 162.8L320.9 167.0L318.6 162.7L315.8 166.7L313.7 162.3L310.7 166.1L308.9 161.6L305.6 165.2L304.1 160.6L300.6 164.1L299.5 159.4L295.7 162.7L294.9 158.0L290.9 161.0L290.4 156.2L286.3 159.0L286.1 154.3L281.8 156.8L281.9 152.1L277.4 154.3L277.9 149.6L273.3 151.6L274.0 147.0L269.4 148.7L270.4 144.1L265.7 145.5L267.0 141.1L262.2 142.2L263.8 137.8L259.0 138.7L260.9 134.4L256.0 135.0L258.3 130.9L253.4 131.1L255.9 127.2L251.0 127.1L253.7 123.3L248.9 123.0L251.9 119.4L247.1 118.7L250.4 115.4L245.6 114.4L249.1 111.3L244.5 110.0L248.2 107.1L243.7 105.5L247.6 102.9L243.2 101.0L247.2 98.6L243.0 96.5L247.2 94.4L243.2 92.0L247.6 90.1L243.7 87.5L248.2 85.9L244.5 83.0L249.1 81.7L245.6 78.6L250.4 77.6L247.1 74.3L251.9 73.6L248.9 70.0L253.7 69.7L251.0 65.9L255.9 65.8L253.4 61.9L258.3 62.1L256.0 58.0L260.9 58.6L259.0 54.3L263.8 55.2L262.2 50.8L267.0 51.9L265.7 47.5L270.4 48.9L269.4 44.3L274.0 46.0L273.3 41.4L277.9 43.4L277.4 38.7L281.9 40.9L281.8 36.2L286.1 38.7L286.3 34.0L290.4 36.8L290.9 32.0L294.9 35.0L295.7 30.3L299.5 33.6L300.6 28.9L304.1 32.4L305.6 27.8L308.9 31.4L310.7 26.9L313.7 30.7L315.8 26.3L318.6 30.3L320.9 26.0L323.5 30.2L326.1 26.0L328.4 30.3L331.2 26.3L333.3 30.7L336.3 26.9L338.1 31.4L341.4 27.8L342.9 32.4L346.4 28.9L347.5 33.6L351.3 30.3L352.1 35.0L356.1 32.0L356.6 36.8L360.7 34.0L360.9 38.7L365.2 36.2L365.1 40.9L369.6 38.7L369.1 43.4L373.7 41.4L373.0 46.0L377.6 44.3L376.6 48.9L381.3 47.5L380.0 51.9L384.8 50.8L383.2 55.2L388.0 54.3L386.1 58.6L391.0 58.0L388.7 62.1L393.6 61.9L391.1 65.8L396.0 65.9L393.3 69.7L398.1 70.0L395.1 73.6L399.9 74.3L396.6 77.6L401.4 78.6L397.9 81.7L402.5 83.0L398.8 85.9L403.3 87.5L399.4 90.1L403.8 92.0L399.8 94.4z" fill="#62615c" stroke="#2c2b27" stroke-width="0.6" stroke-linejoin="round"/><path d="M504.0 95.5L499.8 97.5L503.8 99.9L499.4 101.5L503.2 104.2L498.6 105.5L502.1 108.5L497.4 109.4L500.7 112.7L495.9 113.3L498.9 116.7L494.0 117.0L496.7 120.7L491.8 120.6L494.1 124.5L489.2 124.0L491.2 128.1L486.3 127.3L487.9 131.5L483.1 130.3L484.4 134.7L479.6 133.2L480.5 137.7L475.9 135.8L476.4 140.4L471.9 138.2L472.0 142.8L467.7 140.3L467.4 145.0L463.3 142.1L462.6 146.8L458.7 143.6L457.7 148.3L454.0 144.9L452.6 149.5L449.3 145.8L447.5 150.3L444.4 146.4L442.3 150.8L439.5 146.8L437.0 151.0L434.5 146.8L431.7 150.8L429.6 146.4L426.5 150.3L424.7 145.8L421.4 149.5L420.0 144.9L416.3 148.3L415.3 143.6L411.4 146.8L410.7 142.1L406.6 145.0L406.3 140.3L402.0 142.8L402.1 138.2L397.6 140.4L398.1 135.8L393.5 137.7L394.4 133.2L389.6 134.7L390.9 130.3L386.1 131.5L387.7 127.3L382.8 128.1L384.8 124.0L379.9 124.5L382.2 120.6L377.3 120.7L380.0 117.0L375.1 116.7L378.1 113.3L373.3 112.7L376.6 109.4L371.9 108.5L375.4 105.5L370.8 104.2L374.6 101.5L370.2 99.9L374.2 97.5L370.0 95.5L374.2 93.5L370.2 91.1L374.6 89.5L370.8 86.8L375.4 85.5L371.9 82.5L376.6 81.6L373.3 78.3L378.1 77.7L375.1 74.3L380.0 74.0L377.3 70.3L382.2 70.4L379.9 66.5L384.8 67.0L382.8 62.9L387.7 63.7L386.1 59.5L390.9 60.7L389.6 56.3L394.4 57.8L393.5 53.3L398.1 55.2L397.6 50.6L402.1 52.8L402.0 48.2L406.3 50.7L406.6 46.0L410.7 48.9L411.4 44.2L415.3 47.4L416.3 42.7L420.0 46.1L421.4 41.5L424.7 45.2L426.5 40.7L429.6 44.6L431.7 40.2L434.5 44.2L437.0 40.0L439.5 44.2L442.3 40.2L444.4 44.6L447.5 40.7L449.3 45.2L452.6 41.5L454.0 46.1L457.7 42.7L458.7 47.4L462.6 44.2L463.3 48.9L467.4 46.0L467.7 50.7L472.0 48.2L471.9 52.8L476.4 50.6L475.9 55.2L480.5 53.3L479.6 57.8L484.4 56.3L483.1 60.7L487.9 59.5L486.3 63.7L491.2 62.9L489.2 67.0L494.1 66.5L491.8 70.4L496.7 70.3L494.0 74.0L498.9 74.3L495.9 77.7L500.7 78.3L497.4 81.6L502.1 82.5L498.6 85.5L503.2 86.8L499.4 89.5L503.8 91.1L499.8 93.5z" fill="#62615c" stroke="#2c2b27" stroke-width="0.6" stroke-linejoin="round"/><path d="M81.0 111.5L76.6 113.4L80.2 116.4L75.4 117.0L77.9 121.0L73.1 120.2L74.3 124.7L69.8 122.7L69.6 127.4L65.8 124.3L64.3 128.8L61.5 124.8L58.7 128.8L57.2 124.3L53.4 127.4L53.2 122.7L48.7 124.7L49.9 120.2L45.1 121.0L47.6 117.0L42.8 116.4L46.4 113.4L42.0 111.5L46.4 109.6L42.8 106.6L47.6 106.0L45.1 102.0L49.9 102.8L48.7 98.3L53.2 100.3L53.4 95.6L57.2 98.7L58.7 94.2L61.5 98.2L64.3 94.2L65.8 98.7L69.6 95.6L69.8 100.3L74.3 98.3L73.1 102.8L77.9 102.0L75.4 106.0L80.2 106.6L76.6 109.6z" fill="#62615c" stroke="#2c2b27" stroke-width="0.6" stroke-linejoin="round" transform="rotate(-10 61.5 111.5)"/><circle cx="61.5" cy="111.5" r="3.400" fill="#9a9db2" stroke="#2e2f3a" stroke-width=".7"/><path d="M244.5 104.0L240.1 106.0L243.7 109.1L238.9 109.7L241.4 113.7L236.6 113.0L237.8 117.6L233.3 115.6L233.1 120.4L229.3 117.2L227.8 121.8L225.0 117.8L222.2 121.8L220.7 117.2L216.9 120.4L216.7 115.6L212.2 117.6L213.4 113.0L208.6 113.7L211.1 109.7L206.3 109.1L209.9 106.0L205.5 104.0L209.9 102.0L206.3 98.9L211.1 98.3L208.6 94.3L213.4 95.0L212.2 90.4L216.7 92.4L216.9 87.6L220.7 90.8L222.2 86.2L225.0 90.2L227.8 86.2L229.3 90.8L233.1 87.6L233.3 92.4L237.8 90.4L236.6 95.0L241.4 94.3L238.9 98.3L243.7 98.9L240.1 102.0z" fill="#62615c" stroke="#2c2b27" stroke-width="0.6" stroke-linejoin="round"/><circle cx="225.5" cy="103.5" r="3.800" fill="#a3a6ba" stroke="#2e2f3a" stroke-width=".7"/><path d="M370.0 100.0L365.9 101.9L369.6 104.3L365.2 105.6L368.4 108.5L363.8 109.1L366.5 112.6L361.8 112.5L363.8 116.3L359.1 115.6L360.5 119.7L355.9 118.3L356.6 122.7L352.2 120.7L352.2 125.1L348.2 122.5L347.5 127.0L343.8 123.9L342.4 128.3L339.2 124.7L337.2 128.9L334.5 125.0L331.8 128.9L329.8 124.7L326.6 128.3L325.2 123.9L321.5 127.0L320.8 122.5L316.8 125.1L316.8 120.7L312.4 122.7L313.1 118.3L308.5 119.7L309.9 115.6L305.2 116.3L307.2 112.5L302.5 112.6L305.2 109.1L300.6 108.5L303.8 105.6L299.4 104.3L303.1 101.9L299.0 100.0L303.1 98.1L299.4 95.7L303.8 94.4L300.6 91.5L305.2 90.9L302.5 87.4L307.2 87.5L305.2 83.7L309.9 84.4L308.5 80.3L313.1 81.7L312.4 77.3L316.8 79.3L316.8 74.9L320.8 77.5L321.5 73.0L325.2 76.1L326.6 71.7L329.8 75.3L331.8 71.1L334.5 75.0L337.2 71.1L339.2 75.3L342.4 71.7L343.8 76.1L347.5 73.0L348.2 77.5L352.2 74.9L352.2 79.3L356.6 77.3L355.9 81.7L360.5 80.3L359.1 84.4L363.8 83.7L361.8 87.5L366.5 87.4L363.8 90.9L368.4 91.5L365.2 94.4L369.6 95.7L365.9 98.1z" fill="#62615c" stroke="#2c2b27" stroke-width="0.6" stroke-linejoin="round"/><path d="M134.5 108L132 130" stroke="#2e2f3a" stroke-width="7.7" stroke-linecap="round"/><path d="M134.5 108L132 130" stroke="#8d90a6" stroke-width="6.5" stroke-linecap="round"/><ellipse cx="132" cy="130" rx="3.25" ry="2.65" fill="#a9acbf" stroke="#2e2f3a" stroke-width=".5"/><path d="M336.5 103L333.5 123.5" stroke="#2e2f3a" stroke-width="8.2" stroke-linecap="round"/><path d="M336.5 103L333.5 123.5" stroke="#8d90a6" stroke-width="7" stroke-linecap="round"/><ellipse cx="333.5" cy="123.5" rx="3.5" ry="2.9" fill="#a9acbf" stroke="#2e2f3a" stroke-width=".5"/><ellipse cx="458.6" cy="100.6" rx="71.800" ry="44.600" fill="#a9acbf" stroke="#2e2f3a" stroke-width=".8" transform="rotate(-15 458 101)"/><ellipse cx="457" cy="102" rx="71" ry="44" fill="url(#camG)" stroke="#3a3b48" stroke-width=".7" transform="rotate(-15 458 101)"/><polygon points="403.3,158.3 543.3,133.3 542.7,129.7 402.7,154.7" fill="#9497ad" stroke="#2b2c36" stroke-width=".8"/><path d="M402.9 155.9L542.9 130.9" stroke="#2b2c36" stroke-width=".6" opacity=".8"/><polygon points="403.3,163.3 544.3,138.3 543.7,134.7 402.7,159.7" fill="#787b91" stroke="#2b2c36" stroke-width=".8"/><path d="M402.9 160.9L543.9 135.9" stroke="#2b2c36" stroke-width=".6" opacity=".8"/><polygon points="144.7,205.7 378.7,168.2 377.3,159.8 143.3,197.3" fill="#787b91" stroke="#2b2c36" stroke-width=".8"/><path d="M143.8 200.0L377.8 162.5" stroke="#2b2c36" stroke-width=".6" opacity=".8"/><path d="M374.5 154l24-3.500l5 3l0 14l-25 4l-4-3z" fill="#8f92a8" stroke="#2b2c36" stroke-width=".8"/><ellipse cx="387.5" cy="163.5" rx="3.600" ry="4.200" fill="#b2b5c6" stroke="#2b2c36" stroke-width=".7"/><polygon points="133.0,36.7 146.5,196.7 163.5,195.3 150.0,35.3" fill="#787b90" stroke="#2b2c36" stroke-width=".8"/><polygon points="144.9,35.7 158.4,195.7 163.5,195.3 150.0,35.3" fill="#515466" stroke="#2b2c36" stroke-width=".6"/><path d="M130.5 25.5q10-4 20 0l.5 9l-20 1z" fill="#a0a3b7" stroke="#2b2c36" stroke-width=".8"/><path d="M131.0 28.5q10 3 19.500-.500" fill="none" stroke="#2b2c36" stroke-width=".6"/><path d="M144 197l20-3l1 7l-18 5z" fill="#8f92a8" stroke="#2b2c36" stroke-width=".7"/><ellipse cx="155" cy="202" rx="3.200" ry="2.600" fill="#b8bbcb" stroke="#2b2c36" stroke-width=".7"/><polygon points="422.7,33.7 439.2,224.7 444.8,224.3 428.3,33.3" fill="#7d8097" stroke="#2b2c36" stroke-width=".8"/><path d="M426.5 33.4L443.0 224.4" stroke="#2b2c36" stroke-width=".6" opacity=".8"/><polygon points="433.7,32.7 449.7,223.7 455.3,223.3 439.3,32.3" fill="#7d8097" stroke="#2b2c36" stroke-width=".8"/><path d="M437.5 32.4L453.5 223.4" stroke="#2b2c36" stroke-width=".6" opacity=".8"/></g></svg>
<svg style="left:678px;top:939px;overflow:hidden" width="554" height="72" viewBox="0 0 554 72"><rect width="554" height="72" fill="#c4c7d2"/><g transform="translate(1 0)"><polygon points="214.600,50.400 372,20.600 379.500,23.700 221.500,53" fill="#8c8fa5" stroke="#2b2c36" stroke-width=".6"/><polygon points="214.600,50.400 221.500,53 221.500,60.500 214.600,58" fill="#9093a8" stroke="#2b2c36" stroke-width=".6"/><polygon points="221.500,53 379.500,23.700 379.500,29.400 221.500,60.500" fill="#7b7e94" stroke="#2b2c36" stroke-width=".6"/><path d="M299 41l17 8" stroke="#2b2c36" stroke-width="4.600"/><path d="M299 41l17 8" stroke="#8d90a6" stroke-width="3.400"/><path d="M348.9 55.6L344.6 57.8L348.1 61.1L343.4 61.9L345.9 66.1L341.1 65.6L342.4 70.3L338.0 68.4L337.9 73.3L334.2 70.2L332.7 74.9L330.0 70.8L327.3 74.9L325.8 70.2L322.1 73.3L322.0 68.4L317.6 70.3L318.9 65.6L314.1 66.1L316.6 61.9L311.9 61.1L315.4 57.8L311.1 55.6L315.4 53.4L311.9 50.1L316.6 49.3L314.1 45.1L318.9 45.6L317.6 40.9L322.0 42.8L322.1 37.9L325.8 41.0L327.3 36.3L330.0 40.4L332.7 36.3L334.2 41.0L337.9 37.9L338.0 42.8L342.4 40.9L341.1 45.6L345.9 45.1L343.4 49.3L348.1 50.1L344.6 53.4z" fill="#5e5d57" stroke="#23221f" stroke-width=".9" stroke-linejoin="round"/><path d="M322 70.500l5-2.500l4 2.500l5-2.500l4 2.500l5-2l4 3.500" fill="none" stroke="#4a4944" stroke-width="2.500"/><path d="M331.500 55l16 6.300" stroke="#2b2c36" stroke-width="6.600" stroke-linecap="round"/><path d="M331.500 55l16 6.300" stroke="#8d90a6" stroke-width="5.400" stroke-linecap="round"/><ellipse cx="347.800" cy="61.400" rx="2.500" ry="3" fill="#b2b5c6" stroke="#2b2c36" stroke-width=".5"/></g></svg>
<div id="status" class="abs" style="left:0;top:1011px;width:1393px;height:30px;background:#f4f5f8;border-top:1px solid #e3e5e9"></div>
<div class="t" style="left:10px;top:1019px">页面:</div><div class="t" style="left:41.500px;top:1019px;letter-spacing:.3px">44/48</div>
<div class="vsep" style="left:80px;top:1019px;height:15px;background:#dcdee3"></div>
<div class="t" style="left:89px;top:1019px">字数:</div><div class="t" style="left:120.500px;top:1019px;letter-spacing:.2px">21813</div>
<div class="vsep" style="left:160px;top:1019px;height:15px;background:#dcdee3"></div>
<svg style="left:170px;top:1019px" width="15" height="14" viewBox="0 0 15 14"><path class="ic" d="M.7.700H14.300V11.300H7.500L5.500 13.200L3.500 11.300H.7z" stroke-width="1.100"/><path class="ic" d="M4 5.800L6.600 8.300L11 3.600" stroke-width="1.100"/></svg>
<div class="t" style="left:189px;top:1019px">拼写检查</div>
<div class="vsep" style="left:246px;top:1019px;height:15px;background:#dcdee3"></div>
<svg style="left:257px;top:1019px" width="15" height="14" viewBox="0 0 15 14"><path class="ic" d="M.7.700H14.300V11.300H7.500L5.500 13.200L3.500 11.300H.7z" stroke-width="1.100"/><path class="ic" d="M5 3.500L10 8.500M10 3.500L5 8.500" stroke-width="1.100"/></svg>
<div class="t" style="left:276.500px;top:1019px">文档校对</div>
<div class="t" style="left:343px;top:1019px">兼容模式</div>
<div class="vsep" style="left:397px;top:1019px;height:15px;background:#dcdee3"></div>
<svg style="left:415px;top:1018px" width="18" height="16" viewBox="0 0 18 16"><path class="ic" d="M1 3.500V1.600H10.600V3.500M5.800 1.600V13.600M3.800 13.600H7.800" stroke-width="1.100"/><text x="10.500" y="14" font-size="11" fill="#2e3445" font-family="Liberation Sans, sans-serif">?</text></svg>
<div class="t" style="left:435.500px;top:1019px">缺失字体</div>
<div class="abs" style="left:0;top:1039px;width:1393px;height:2px;background:linear-gradient(90deg,#dfe6ea 0,#c6d8de 200px,#bfd3da 100%)"></div>
</body></html>
